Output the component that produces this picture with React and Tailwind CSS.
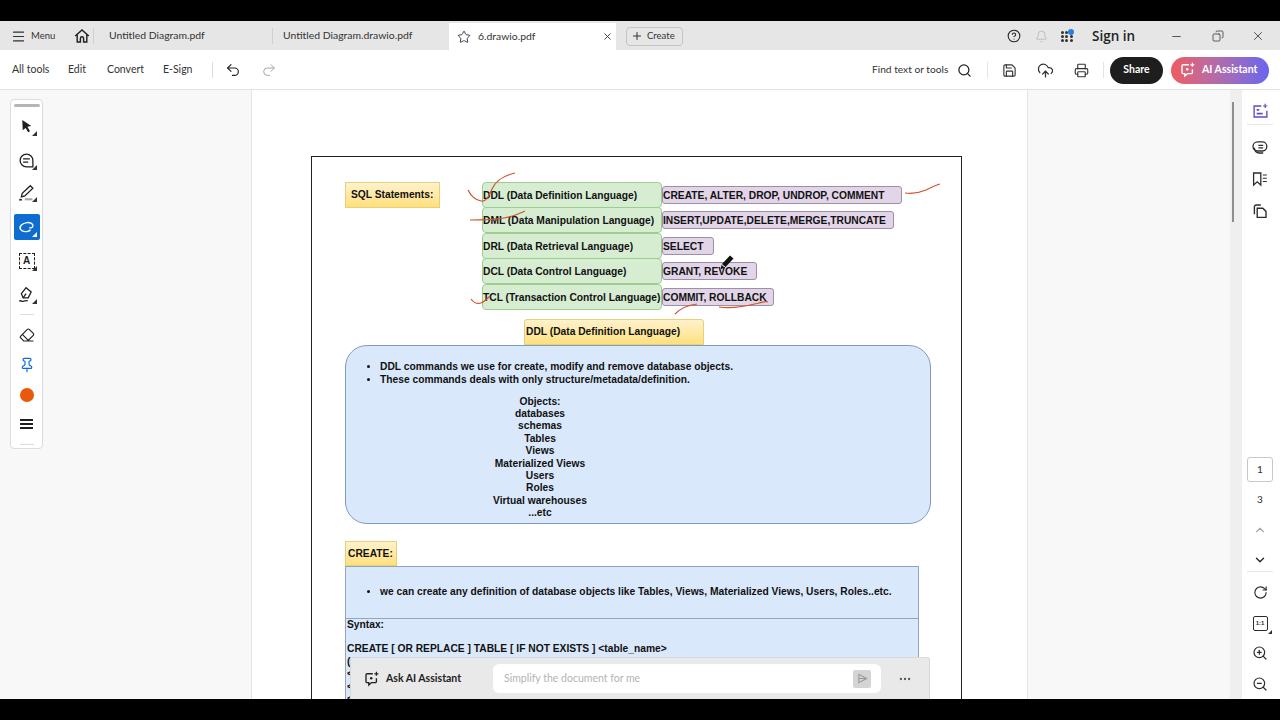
import React from 'react';
import {
  Menu, Star, X, Plus, CircleHelp, Bell, Minus, Undo2, Redo2, Search, Save, CloudUpload, Printer,
  Eraser, Pin, Copy, ChevronUp, ChevronDown, RotateCw, ZoomIn, ZoomOut, Ellipsis,
} from 'lucide-react';

const ui = { fontFamily: 'Lato, "Open Sans", sans-serif' };
const doc = { fontFamily: '"Liberation Sans", Arial, sans-serif' };

const rows = [
  ['DDL (Data Definition Language)', 'CREATE, ALTER, DROP, UNDROP, COMMENT', 'w-[240px]'],
  ['DML (Data Manipulation Language)', 'INSERT,UPDATE,DELETE,MERGE,TRUNCATE', 'w-[232px]'],
  ['DRL (Data Retrieval Language)', 'SELECT', 'w-[52px]'],
  ['DCL (Data Control Language)', 'GRANT, REVOKE', 'w-[95px]'],
  ['TCL (Transaction Control Language)', 'COMMIT, ROLLBACK', 'w-[112px]'],
];

const objects = ['Objects:', 'databases', 'schemas', 'Tables', 'Views', 'Materialized Views', 'Users', 'Roles', 'Virtual warehouses', '...etc'];

// small corner triangle on tools with a flyout
const Flyout = ({ light }) => (
  <span className={`absolute right-[3px] bottom-[3px] w-0 h-0 border-l-[5px] border-l-transparent border-b-[5px] ${light ? 'border-b-white' : 'border-b-[#333]'}`} />
);

const AiIcon = ({ className }) => (
  <svg viewBox="0 0 20 20" fill="none" stroke="currentColor" strokeWidth="1.7" className={className}>
    <path d="M11 3.500H4a1.500 1.500 0 0 0-1.500 1.500v8A1.500 1.500 0 0 0 4 14.500h2v3l3.500-3H14a1.500 1.500 0 0 0 1.500-1.500V9" />
    <circle cx="9" cy="9" r="1.600" fill="currentColor" stroke="none" />
    <path d="M15.500 1v5M13 3.500h5" strokeWidth="1.500" />
  </svg>
);

const ToolSlot = ({ children, className = '' }) => (
  <div className={`relative w-[26px] h-[26px] flex items-center justify-center ${className}`}>{children}</div>
);

const LeftTools = () => (
  <div className="ml-[10px] mt-[9px] w-[33px] h-[350px] bg-white border border-[#dcdcdc] rounded-[4px] flex flex-col items-center text-[#1f1f1f]">
    <div className="w-[26px] h-[3px] bg-[#b5b5b5] mt-[4px] rounded-sm" />
    <ToolSlot className="mt-[6px]">
      <svg viewBox="0 0 14 16" className="w-[12px] h-[14px]">
        <path d="M1.500 1l10.500 7-4.500 1 3 5-2.200 1.200-2.800-5L2 13z" fill="#1f1f1f" />
      </svg>
      <Flyout />
    </ToolSlot>
    <ToolSlot className="mt-[8px]">
      <svg viewBox="0 0 20 20" fill="none" stroke="#1f1f1f" strokeWidth="1.500" className="w-[17px] h-[17px]">
        <path d="M10 2.500a7.500 7.500 0 1 0 0 15h7.500v-7.500A7.500 7.500 0 0 0 10 2.500z" />
        <path d="M6 8h8M6 12h6" />
      </svg>
      <Flyout />
    </ToolSlot>
    <ToolSlot className="mt-[6px]">
      <svg viewBox="0 0 20 20" fill="none" stroke="#1f1f1f" strokeWidth="1.500" className="w-[17px] h-[17px]">
        <path d="M14.500 2l3 3L8 14l-4 1 1-4z" />
        <path d="M1.500 18.500h3" strokeWidth="2" />
        <path d="M8 18h9" stroke="#a8a8a8" strokeWidth="2.500" />
      </svg>
      <Flyout />
    </ToolSlot>
    <ToolSlot className="mt-[9px] bg-[#0f6cd0] rounded-[2px]">
      <svg viewBox="0 0 20 14" fill="none" stroke="white" strokeWidth="1.500" className="w-[18px] h-[13px]">
        <path d="M3 9.500C.5 6.500 4.500 2 10 1.500c4-.3 7 1.500 6.500 4-.3 1.500-2 2.300-4 1.700M2.500 6.500c-.5 3.500 3 5.500 7 5 2-.2 3.500-.8 4.500-2" />
      </svg>
      <Flyout light />
    </ToolSlot>
    <ToolSlot className="mt-[8px]">
      <div className="w-[16px] h-[16px] border border-dashed border-[#1f1f1f] flex items-center justify-center text-[10px] font-bold leading-none" style={doc}>A</div>
      <Flyout />
    </ToolSlot>
    <ToolSlot className="mt-[7px]">
      <svg viewBox="0 0 20 20" fill="none" stroke="#1f1f1f" strokeWidth="1.500" className="w-[17px] h-[17px]">
        <path d="M9.500 2l6 5-3.500 7H6L4 9z" />
        <path d="M6 14l3.500-5" />
        <path d="M1.500 18c2-2 3 1 5 0s3-1.500 5-.5" />
      </svg>
      <Flyout />
    </ToolSlot>
    <div className="w-[14px] h-px bg-[#dcdcdc] mt-[7px]" />
    <Eraser size={16} strokeWidth={1.7} className="mt-[12px]" />
    <Pin size={16} strokeWidth={1.8} className="mt-[14px] text-[#0f6cd0]" />
    <div className="w-[14px] h-[14px] rounded-full bg-[#e8590c] mt-[15px]" />
    <div className="mt-[17px] w-[13px] flex flex-col gap-[2px]">
      <div className="h-[2px] bg-[#1f1f1f]" />
      <div className="h-[2px] bg-[#1f1f1f]" />
      <div className="h-[2px] bg-[#1f1f1f]" />
    </div>
    <div className="w-[14px] h-px bg-[#dcdcdc] mt-[15px]" />
  </div>
);

const RightRail = () => (
  <div className="w-[38px] bg-white flex flex-col items-center text-[#2c2c2c] pr-[2px]">
    <svg viewBox="0 0 20 20" fill="none" stroke="#5a4fc4" strokeWidth="1.600" className="w-[17px] h-[17px] mt-[13px]">
      <path d="M11 3.500H2.500v13h15V9" />
      <path d="M5.500 8h3M5.500 12.500h7" strokeWidth="2" />
      <path d="M15.500 1v5M13 3.500h5" strokeWidth="1.400" />
    </svg>
    <div className="w-[26px] h-px bg-[#e8e8e8] mt-[4px]" />
    <svg viewBox="0 0 20 20" fill="none" stroke="currentColor" strokeWidth="1.600" className="w-[16px] h-[16px] mt-[14px]">
      <path d="M7 3.500h6a5.500 5.500 0 0 1 5.500 5.500v.5a5.500 5.500 0 0 1-5.500 5.500H7A5 5 0 0 1 7 3.500z" />
      <path d="M3 11a6 6 0 0 0 6 6.500h5" />
      <path d="M8 8h6M8 11h6" />
    </svg>
    <svg viewBox="0 0 20 20" fill="none" stroke="currentColor" strokeWidth="1.600" className="w-[16px] h-[16px] mt-[16px]">
      <path d="M2 2.500h9v15l-4.500-4-4.500 4z" />
      <path d="M13.500 5h5M13.500 9h5M13.500 13h5" strokeWidth="1.300" />
    </svg>
    <svg viewBox="0 0 20 20" fill="none" stroke="currentColor" strokeWidth="1.700" className="w-[16px] h-[16px] mt-[16px]">
      <path d="M3 14V5a2.500 2.500 0 0 1 2.500-2.500H11" />
      <path d="M6.500 6.500h7l4 4V18h-11z" />
    </svg>
    <div className="w-[26px] h-[25px] mt-[238px] border border-[#c8c8c8] rounded-[3px] flex items-center justify-center text-[10px]" style={ui}>1</div>
    <div className="mt-[10px] text-[10px] leading-[14px]" style={ui}>3</div>
    <ChevronUp size={14} strokeWidth={2} className="mt-[17px] text-[#a8a8a8]" />
    <ChevronDown size={14} strokeWidth={2.500} className="mt-[16px]" />
    <div className="w-[26px] h-px bg-[#e8e8e8] mt-[4px]" />
    <RotateCw size={15} strokeWidth={1.800} className="mt-[13px]" />
    <div className="relative mt-[16px] w-[15px] h-[15px] border-[1.5px] border-[#2c2c2c] rounded-[2px] text-[6px] font-bold flex items-center justify-center" style={doc}>
      1:1
      <span className="absolute -right-[5px] -bottom-[4px] w-0 h-0 border-l-[4px] border-l-transparent border-b-[4px] border-b-[#333]" />
    </div>
    <ZoomIn size={16} strokeWidth={1.800} className="mt-[14px]" />
    <ZoomOut size={16} strokeWidth={1.800} className="mt-[15px]" />
  </div>
);

const PageContent = () => (
  <div className="relative ml-[59px] mt-[66px] w-[651px] h-[600px] border border-[#222] border-b-0 pl-[33px] font-bold text-[10.250px] text-[#111]" style={doc}>
    {/* statements diagram */}
    <div className="flex items-start pt-[25px]">
      <div className="w-[95px] h-[26px] bg-gradient-to-b from-[#fff2cc] to-[#ffe07a] border border-[#e8cf7c] flex items-center pl-[5px] whitespace-nowrap">SQL Statements:</div>
      <div className="ml-[42px]">
        {rows.map(([name, cmds, w]) => (
          <div key={name} className="flex items-center h-[25.500px]">
            <div className="w-[180px] h-[26px] shrink-0 bg-[#d7edd2] border border-[#9ccf8f] rounded-[4px] flex items-center pt-[1px] whitespace-nowrap">{name}</div>
            <div className={`${w} h-[18px] bg-[#e1d5e7] border border-[#9d8fa8] rounded-[3px] flex items-center pt-[1px] whitespace-nowrap`}>{cmds}</div>
          </div>
        ))}
      </div>
    </div>

    <div className="ml-[179px] mt-[9px] w-[180px] h-[26px] bg-gradient-to-b from-[#fff2cc] to-[#ffe07a] border border-[#e8cf7c] rounded-t-[3px] flex items-center pl-[1px]">DDL (Data Definition Language)</div>

    {/* ddl description */}
    <div className="w-[586px] h-[179px] bg-[#dae8fc] border border-[#7f9cc0] rounded-[22px] pt-[14px]">
      <ul className="list-disc pl-[34px] leading-[13px]">
        <li>DDL commands we use for create, modify and remove database objects.</li>
        <li>These commands deals with only structure/metadata/definition.</li>
      </ul>
      <div className="w-[388px] mt-[10px] text-center leading-[12.400px]">
        {objects.map((o) => (
          <div key={o}>{o}</div>
        ))}
      </div>
    </div>

    <div className="mt-[17px] w-[52px] h-[25px] bg-gradient-to-b from-[#fff2cc] to-[#ffe07a] border border-[#e8cf7c] flex items-center pl-[2px] pt-[1px]">CREATE:</div>
    <div className="w-[574px] border border-[#8fa6c2] bg-[#dae8fc]">
      <div className="h-[52px] border-b border-[#8fa6c2] flex items-center">
        <ul className="list-disc pl-[34px]">
          <li>we can create any definition of database objects like Tables, Views, Materialized Views, Users, Roles..etc.</li>
        </ul>
      </div>
      <div className="pl-[1px] h-[120px] leading-[12.500px]">
        <div>Syntax:</div>
        <div className="mt-[12px]">CREATE [ OR REPLACE ] TABLE [ IF NOT EXISTS ] &lt;table_name&gt;</div>
        <div>(</div>
        <div>&lt;</div>
        <div>&lt;</div>
        <div>&lt;</div>
      </div>
    </div>

    {/* pen marks drawn over the page */}
    <svg viewBox="0 0 651 200" fill="none" stroke="#d0532c" strokeWidth="1.200" className="absolute left-0 top-0 w-[651px] h-[200px] pointer-events-none">
      <path d="M156 33c3 6 7 10 13 11 6 1 8-6 11-12 4-8 10-13 23-16" />
      <path d="M158 63c10 0 22 0 34-2 8-1 14-4 21-7" />
      <path d="M159 142c3 4 7 5 10 4 3-1 6-4 9-7" />
      <path d="M593 36c8 1 14 0 21-3 6-3 10-5 14-6" />
      <path d="M363 157c5-5 13-9 22-10" />
      <path d="M407 150c12 2 28-1 40-4 4-1 7-2 9-1" />
    </svg>
    <svg viewBox="0 0 15 16" className="absolute left-[407px] top-[98px] w-[15px] h-[16px]">
      <path d="M11 .5l3.500 3L6.500 12 3 9zM2.500 10l3 2.500-4 2z" fill="#111" />
    </svg>
  </div>
);

const AskBar = () => (
  <div className="absolute left-[98px] bottom-0 w-[580px] h-[42px] bg-[#e9e9e9] border border-[#d8d8d8] border-b-0 rounded-t-[3px] flex items-center pl-[13px] text-[#222]" style={ui}>
    <AiIcon className="w-[16px] h-[16px]" />
    <span className="ml-[6px] text-[10.500px] font-bold w-[107px] whitespace-nowrap">Ask AI Assistant</span>
    <div className="w-[388px] h-[29px] bg-white rounded-[6px] flex items-center pl-[11px] pr-[10px] text-[10.500px] text-[#b3b3b3]">
      <span className="flex-1">Simplify the document for me</span>
      <div className="w-[18px] h-[18px] bg-[#d4d4d4] rounded-[2px] flex items-center justify-center">
        <svg viewBox="0 0 12 12" fill="none" stroke="#9a9a9a" strokeWidth="1.200" className="w-[11px] h-[11px]">
          <path d="M2 1.500L10.500 6 2 10.500zM2 6h8.500" />
        </svg>
      </div>
    </div>
    <Ellipsis size={14} className="ml-[17px] text-[#555]" />
  </div>
);

export default function App() {
  return (
    <div className="w-[1280px] h-[720px] bg-black flex flex-col overflow-hidden" style={ui}>
      <div className="h-[21px] shrink-0" />

      {/* tab bar */}
      <div className="h-[29px] shrink-0 bg-[#e6e6e6] flex items-center pt-[1px] text-[#333] text-[10.400px]">
        <Menu size={15} strokeWidth={1.800} className="ml-[11px]" />
        <span className="ml-[5px] text-[9.500px] w-[39px]">Menu</span>
        <svg viewBox="0 0 20 20" fill="none" stroke="#222" strokeWidth="1.800" className="ml-[4px] w-[16px] h-[16px]">
          <path d="M1.500 10L10 2.500 18.500 10M4 8v9.500h4V13a2 2 0 0 1 4 0v4.500h4V8" />
        </svg>
        <div className="w-px h-[16px] bg-[#cfcfcf] ml-[3px]" />
        <span className="ml-[15px] w-[163px]">Untitled Diagram.pdf</span>
        <div className="w-px h-[16px] bg-[#cfcfcf]" />
        <span className="ml-[10px] w-[166px]">Untitled Diagram.drawio.pdf</span>
        <div className="w-[167px] h-[27px] self-end bg-white flex items-center pl-[8px] pr-[3px]">
          <Star size={14} strokeWidth={1.600} />
          <span className="ml-[7px] flex-1">6.drawio.pdf</span>
          <X size={11} strokeWidth={2} />
        </div>
        <div className="ml-[10px] w-[57px] h-[19px] border border-[#c4c4c4] rounded-[4px] flex items-center pl-[4px] text-[9.500px]">
          <Plus size={12} strokeWidth={2} />
          <span className="ml-[4px]">Create</span>
        </div>
        <CircleHelp size={14} strokeWidth={1.800} className="ml-[324px] text-[#222]" />
        <Bell size={13} strokeWidth={1.500} className="ml-[14px] text-[#b4b4b4]" />
        <div className="ml-[13px] relative w-[12px] h-[13px] grid grid-cols-3 gap-[1px] content-center">
          {[0, 1, 2, 3, 4, 5, 6, 7, 8].map((i) => (
            <span key={i} className="w-[3px] h-[3px] rounded-full bg-[#333]" />
          ))}
          <span className="absolute -right-[1px] -top-[1px] w-[6px] h-[6px] rounded-full bg-[#2680eb]" />
        </div>
        <span className="ml-[19px] w-[45px] text-[13.500px] font-semibold text-[#222] whitespace-nowrap" style={{ fontFamily: '"Open Sans", sans-serif' }}>Sign in</span>
        <Minus size={13} strokeWidth={1.500} className="ml-[33px]" />
        <Copy size={12} strokeWidth={1.500} className="ml-[29px] -scale-x-100" />
        <X size={14} strokeWidth={1.400} className="ml-[27px]" />
      </div>

      {/* tools bar */}
      <div className="h-[40px] shrink-0 bg-white border-b border-[#e1e1e1] flex items-center pt-[1px] text-[#333] text-[10.500px]">
        <span className="ml-[12px] w-[56px]">All tools</span>
        <span className="w-[39px]">Edit</span>
        <span className="w-[56px]">Convert</span>
        <span className="w-[49px]">E-Sign</span>
        <div className="w-px h-[16px] bg-[#dcdcdc]" />
        <Undo2 size={16} strokeWidth={1.700} className="ml-[12px] text-[#222]" />
        <Redo2 size={16} strokeWidth={1.500} className="ml-[20px] text-[#a6a6a6]" />
        <span className="ml-[595px] w-[79px] text-[10.200px] whitespace-nowrap">Find text or tools</span>
        <Search size={15} strokeWidth={2} className="ml-[6px] text-[#222]" />
        <div className="w-px h-[16px] bg-[#e4e4e4] ml-[15px]" />
        <Save size={15} strokeWidth={1.800} className="ml-[14px]" />
        <CloudUpload size={17} strokeWidth={1.800} className="ml-[20px]" />
        <Printer size={15} strokeWidth={1.800} className="ml-[20px]" />
        <div className="w-px h-[16px] bg-[#e4e4e4] ml-[14px]" />
        <div className="ml-[6px] w-[53px] h-[27px] rounded-full bg-[#1e1e1e] text-white flex items-center justify-center text-[10.500px] font-bold">Share</div>
        <div className="ml-[8px] w-[98px] h-[27px] rounded-full bg-gradient-to-r from-[#ee5a5f] to-[#6a63f0] text-white flex items-center pl-[9px] text-[10.500px] font-bold">
          <AiIcon className="w-[16px] h-[16px]" />
          <span className="ml-[6px] whitespace-nowrap">AI Assistant</span>
        </div>
      </div>

      {/* workspace */}
      <div className="flex-1 min-h-0 flex bg-[#f8f8f8]">
        <div className="w-[251px] shrink-0">
          <LeftTools />
        </div>
        <div className="relative w-[777px] shrink-0 bg-white border-x border-[#e4e4e4] overflow-hidden">
          <PageContent />
          <AskBar />
        </div>
        <div className="flex-1" />
        <div className="w-[12px] bg-[#efefef] pl-[2px] pt-[12px]">
          <div className="w-[2px] h-[120px] bg-[#8e8e8e]" />
        </div>
        <RightRail />
      </div>

      <div className="h-[21px] shrink-0" />
    </div>
  );
}
